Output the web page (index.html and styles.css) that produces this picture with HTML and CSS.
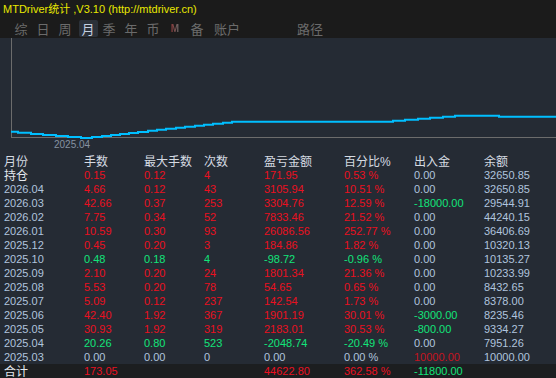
FILE: index.html
```html
<!DOCTYPE html>
<html lang="zh">
<head>
<meta charset="utf-8">
<title>MTDriver统计</title>
<link rel="stylesheet" href="styles.css">
</head>
<body>
<div class="app">
  <header class="top">
    <div class="title">MTDriver<span class="cjk">统计</span> ,V3.10 (http://mtdriver.cn)</div>
    <nav class="tabs">
      <span class="tab">综</span>
      <span class="tab">日</span>
      <span class="tab">周</span>
      <span class="tab active"><span class="sel">月</span></span>
      <span class="tab">季</span>
      <span class="tab">年</span>
      <span class="tab">币</span>
      <span class="tab"><span class="mlogo">M</span></span>
      <span class="tab">备</span>
      <span class="tab wide">账户</span>
      <span class="tab path">路径</span>
    </nav>
  </header>

  <section class="chart">
    <svg width="556" height="116" viewBox="0 0 556 116">
      <line x1="11.5" y1="0" x2="11.5" y2="99.5" stroke="#6c6c6c" stroke-width="1"/>
      <line x1="11" y1="99.5" x2="556" y2="99.5" stroke="#6c6c6c" stroke-width="1"/>
      <path fill="none" stroke="#00bfff" stroke-width="2"
        d="M11 93.7 H18 V94.7 H31 V96 H43 V97 H56 V98 H68 V99 H81 V100 H92 V99 H102 V98 H111 V97 H120 V96 H129 V95 H138 V94 H148 V92.7 H157 V91.7 H166 V90.7 H176 V89.7 H185 V88.7 H195 V87.7 H204 V86.7 H213 V85.7 H223 V84.7 H232 V83.7 H393 V82.7 H405 V81.7 H418 V80.7 H430 V79.7 H443 V78.7 H455 V77.7 H499 V78.7 H556"/>
      <text x="54" y="110" class="axis-label">2025.04</text>
    </svg>
  </section>

  <section class="table">
    <div class="row head">
      <span>月份</span><span>手数</span><span>最大手数</span><span>次数</span><span>盈亏金额</span><span>百分比<span class="pct">%</span></span><span>出入金</span><span>余额</span>
    </div>
    <div class="row">
      <span class="cjk w">持仓</span><span class="r">0.15</span><span class="r">0.12</span><span class="r">4</span><span class="r">171.95</span><span class="r">0.53 %</span><span class="b">0.00</span><span class="b">32650.85</span>
    </div>
    <div class="row">
      <span class="b">2026.04</span><span class="r">4.66</span><span class="r">0.12</span><span class="r">43</span><span class="r">3105.94</span><span class="r">10.51 %</span><span class="b">0.00</span><span class="b">32650.85</span>
    </div>
    <div class="row">
      <span class="b">2026.03</span><span class="r">42.66</span><span class="r">0.37</span><span class="r">253</span><span class="r">3304.76</span><span class="r">12.59 %</span><span class="g">-18000.00</span><span class="b">29544.91</span>
    </div>
    <div class="row">
      <span class="b">2026.02</span><span class="r">7.75</span><span class="r">0.34</span><span class="r">52</span><span class="r">7833.46</span><span class="r">21.52 %</span><span class="b">0.00</span><span class="b">44240.15</span>
    </div>
    <div class="row">
      <span class="b">2026.01</span><span class="r">10.59</span><span class="r">0.30</span><span class="r">93</span><span class="r">26086.56</span><span class="r">252.77 %</span><span class="b">0.00</span><span class="b">36406.69</span>
    </div>
    <div class="row">
      <span class="b">2025.12</span><span class="r">0.45</span><span class="r">0.20</span><span class="r">3</span><span class="r">184.86</span><span class="r">1.82 %</span><span class="b">0.00</span><span class="b">10320.13</span>
    </div>
    <div class="row">
      <span class="b">2025.10</span><span class="g">0.48</span><span class="g">0.18</span><span class="g">4</span><span class="g">-98.72</span><span class="g">-0.96 %</span><span class="b">0.00</span><span class="b">10135.27</span>
    </div>
    <div class="row">
      <span class="b">2025.09</span><span class="r">2.10</span><span class="r">0.20</span><span class="r">24</span><span class="r">1801.34</span><span class="r">21.36 %</span><span class="b">0.00</span><span class="b">10233.99</span>
    </div>
    <div class="row">
      <span class="b">2025.08</span><span class="r">5.53</span><span class="r">0.20</span><span class="r">78</span><span class="r">54.65</span><span class="r">0.65 %</span><span class="b">0.00</span><span class="b">8432.65</span>
    </div>
    <div class="row">
      <span class="b">2025.07</span><span class="r">5.09</span><span class="r">0.12</span><span class="r">237</span><span class="r">142.54</span><span class="r">1.73 %</span><span class="b">0.00</span><span class="b">8378.00</span>
    </div>
    <div class="row">
      <span class="b">2025.06</span><span class="r">42.40</span><span class="r">1.92</span><span class="r">367</span><span class="r">1901.19</span><span class="r">30.01 %</span><span class="g">-3000.00</span><span class="b">8235.46</span>
    </div>
    <div class="row">
      <span class="b">2025.05</span><span class="r">30.93</span><span class="r">1.92</span><span class="r">319</span><span class="r">2183.01</span><span class="r">30.53 %</span><span class="g">-800.00</span><span class="b">9334.27</span>
    </div>
    <div class="row">
      <span class="b">2025.04</span><span class="g">20.26</span><span class="g">0.80</span><span class="g">523</span><span class="g">-2048.74</span><span class="g">-20.49 %</span><span class="b">0.00</span><span class="b">7951.26</span>
    </div>
    <div class="row">
      <span class="b">2025.03</span><span class="b">0.00</span><span class="b">0.00</span><span class="b">0</span><span class="b">0.00</span><span class="b">0.00 %</span><span class="dr">10000.00</span><span class="b">10000.00</span>
    </div>
    <div class="row total">
      <span class="cjk w">合计</span><span class="r">173.05</span><span></span><span></span><span class="r">44622.80</span><span class="r">362.58 %</span><span class="g">-11800.00</span><span></span>
    </div>
  </section>
</div>
</body>
</html>
```

FILE: styles.css
```css
html, body {
  margin: 0;
  padding: 0;
  background: #252b34;
}
body {
  width: 556px;
  height: 378px;
  overflow: hidden;
  font-family: "Liberation Sans", "Noto Sans CJK SC", sans-serif;
  font-size: 11px;
}
.app {
  display: flex;
  flex-direction: column;
  width: 556px;
  height: 378px;
}
.top {
  background: #1b1b1b;
  height: 38px;
  display: flex;
  flex-direction: column;
}
.title {
  height: 19px;
  line-height: 16px;
  padding-left: 3px;
  color: #e8e800;
  font-size: 11px;
  white-space: nowrap;
}
.title .cjk {
  font-family: "Noto Sans CJK SC", sans-serif;
  font-size: 11px;
}
.tabs {
  height: 19px;
  display: flex;
  align-items: center;
  padding-left: 10px;
  font-family: "Noto Sans CJK SC", sans-serif;
  font-size: 13px;
  color: #6b6b6b;
}
.tab {
  width: 22px;
  height: 19px;
  line-height: 19px;
  display: flex;
  align-items: center;
  justify-content: center;
}
.tab.wide {
  width: 38px;
}
.tab.path {
  width: 30px;
  margin-left: 49px;
}
.sel {
  display: block;
  width: 19px;
  height: 17px;
  line-height: 17px;
  text-align: center;
  background: #2b3139;
  border-radius: 2px;
  color: #c4d0e0;
  margin-left: 2px;
}
.mlogo {
  font-family: "Liberation Sans", sans-serif;
  font-weight: bold;
  font-size: 10px;
  background: linear-gradient(90deg, #8a3a3a, #6a6a6a);
  -webkit-background-clip: text;
  background-clip: text;
  color: transparent;
}
.chart {
  height: 116px;
  flex: none;
}
.chart svg {
  display: block;
}
.axis-label {
  font-family: "Liberation Sans", sans-serif;
  font-size: 10px;
  fill: #8592a2;
}
.table {
  display: flex;
  flex-direction: column;
  flex: 1;
}
.row {
  display: grid;
  grid-template-columns: 80px 60px 60px 60px 80px 70px 70px 1fr;
  padding-left: 4px;
  height: 14px;
  line-height: 14px;
  white-space: nowrap;
  flex: none;
}
.row.head {
  font-family: "Noto Sans CJK SC", sans-serif;
  font-size: 12px;
  color: #d6dbe2;
}
.row.head .pct {
  font-family: "Liberation Sans", sans-serif;
  font-size: 12px;
}
.row.total {
  background: #1c1e20;
}
.cjk {
  font-family: "Noto Sans CJK SC", sans-serif;
  font-size: 12px;
}
.w { color: #e4e8ee; }
.r { color: #ea1020; }
.dr { color: #c41420; }
.g { color: #12e47a; }
.b { color: #b0c4de; }
```
